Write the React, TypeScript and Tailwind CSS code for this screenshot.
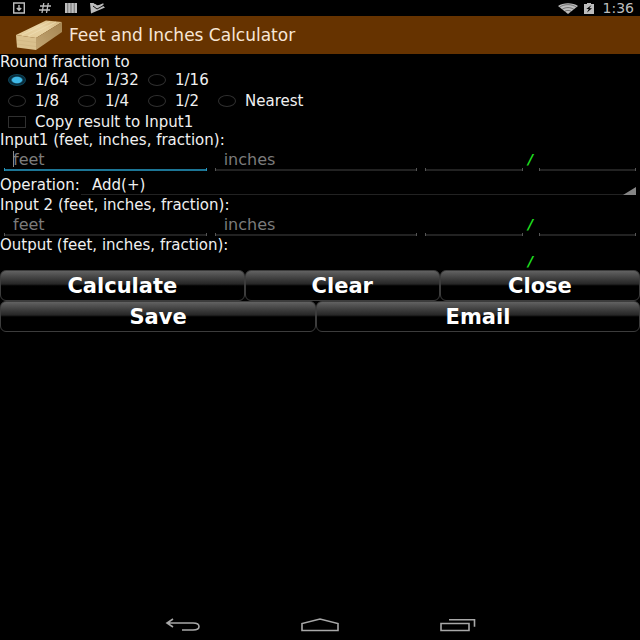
import { useState } from "react";
import type { ReactNode } from "react";

function Field({ label, hint, active = false }: { label: string; hint?: string; active?: boolean }) {
  return (
    <div className="relative mx-1 min-w-0">
      <input
        type="text"
        aria-label={label}
        placeholder={hint}
        className={`block h-6 w-full border-b-2 bg-transparent pl-[9px] pt-1 text-base text-white outline-none placeholder:text-[#7b7b7b] ${
          active ? "border-[#1c7595]" : "border-[#222222]"
        }`}
      />
      <span
        className={`pointer-events-none absolute inset-x-0 bottom-0 h-[3px] border-x ${
          active ? "border-[#2793b8]" : "border-[#555555]"
        }`}
      />
      {active && <span className="pointer-events-none absolute left-[9px] top-1 h-4 w-px bg-[#8a8a8a]" />}
    </div>
  );
}

function Slash() {
  return <span className="text-center text-sm font-bold italic leading-6 text-[#1fe01f]">/</span>;
}

function MeasureRow({ name, active }: { name: string; active?: boolean }) {
  return (
    <div className="grid h-[25px] grid-cols-[2fr_2fr_1fr_8px_1fr] items-start">
      <Field label={`${name} feet`} hint="feet" active={active} />
      <Field label={`${name} inches`} hint="inches" />
      <Field label={`${name} numerator`} />
      <Slash />
      <Field label={`${name} denominator`} />
    </div>
  );
}

function Caption({ children }: { children: ReactNode }) {
  return <div className="h-[15px] text-[15px] leading-[17px]">{children}</div>;
}

function PanelButton({ children, grow }: { children: ReactNode; grow: string }) {
  return (
    <button
      type="button"
      className={`h-[31px] min-w-0 rounded-md border border-[#3c3c3c] bg-linear-to-b from-[#626262] via-[#262626] via-45% to-black to-55% pt-[2px] text-[21px] font-bold leading-none ${grow}`}
    >
      {children}
    </button>
  );
}

const rows = [
  ["1/64", "1/32", "1/16"],
  ["1/8", "1/4", "1/2", "Nearest"],
];

export default function App() {
  const [fraction, setFraction] = useState("1/64");

  return (
    <div className="flex min-h-screen flex-col bg-black font-['DejaVu_Sans',sans-serif] text-[#f0f0f0]">
      <div className="flex h-4 items-center justify-between pl-3 pr-[6px] text-[#bdbdbd]">
        <div className="flex items-center gap-3">
          <svg width="14" height="12" viewBox="0 0 14 12" fill="none" stroke="currentColor" strokeWidth="1.4">
            <path d="M1.7 1h10.6v10H1.7zM7 3v5M4.8 6 7 8.2 9.2 6" />
          </svg>
          <svg width="14" height="12" viewBox="0 0 14 12" fill="none" stroke="currentColor" strokeWidth="1.3">
            <path d="M5.8 1 4 11M10.3 1 8.5 11M2 4h11M1 8h11" />
          </svg>
          <svg width="14" height="12" viewBox="0 0 14 12" fill="currentColor">
            <path d="M1 1h2.7v10H1zM4.1 1h2.7v10H4.1zM7.2 1h2.7v10H7.2zM10.3 1H13v10h-2.7z" />
          </svg>
          <svg width="16" height="12" viewBox="0 0 16 12">
            <path d="M0 1h3.500l3 2.500L12 3l3 2.500L1 11.500z" fill="currentColor" />
            <path d="m3 4 4 3L14.500 3" fill="none" stroke="#000000" strokeWidth=".9" />
            <path d="m5 2.500 2.500 2L13.500 1.800" fill="none" stroke="currentColor" strokeWidth="1.400" />
          </svg>
        </div>
        <div className="flex items-center gap-1">
          <svg width="22" height="11" viewBox="0 0 22 11">
            <path d="M1 3C6-.6 16-.6 21 3L11 11z" fill="currentColor" />
            <path d="M2.5 4.2C7.5.8 14.5.8 19.5 4.2M5.2 6.3c3.6-2.3 8-2.3 11.6 0M7.8 8.3c2-1.2 4.4-1.2 6.4 0" fill="none" stroke="#000000" strokeWidth=".4" />
          </svg>
          <svg width="12" height="12" viewBox="0 0 12 12">
            <path d="M1 2h3V1h4v1h3v10H1z" fill="currentColor" />
            <path d="M8.5 3 3.3 7h2.5L4 10.5 9 6.3H6.3z" fill="#000000" />
          </svg>
          <span className="pl-1 text-sm leading-4">1:36</span>
        </div>
      </div>

      <header className="flex h-[38px] items-center bg-[#663300] pl-[15px]">
        <svg width="48" height="32" viewBox="0 0 48 32">
          <defs>
            <linearGradient id="woodTop" x1="0" y1="1" x2="1" y2="0">
              <stop offset="0" stopColor="#e3ca96" />
              <stop offset=".6" stopColor="#e8d3a4" />
              <stop offset="1" stopColor="#d3b57e" />
            </linearGradient>
            <linearGradient id="woodSide" x1="0" y1="1" x2="1" y2="0">
              <stop offset="0" stopColor="#c3a673" />
              <stop offset="1" stopColor="#a58552" />
            </linearGradient>
          </defs>
          <path d="M1 16 31 1.5 47 3 21 19z" fill="url(#woodTop)" />
          <path d="M1 16 21 19v12L2 28.5z" fill="#dac18e" />
          <path d="M21 19 47 3v10L21 31z" fill="url(#woodSide)" />
          <path d="M7 16 35 2.5M13 17 41 3" stroke="#efdfb6" strokeWidth=".7" />
          <path d="m2 21 19 2.500M2 25l19 2.500" stroke="#cbb17c" strokeWidth=".5" />
        </svg>
        <h1 className="pl-[6px] text-[17px] leading-5 text-[#f7e6d6]">Feet and Inches Calculator</h1>
      </header>

      <main className="flex-1">
        <fieldset>
          <legend className="block h-[15px] text-[15px] leading-[17px]">Round fraction to</legend>
          {rows.map((row) => (
            <div key={row[0]} className="flex h-[21px] pl-2">
              {row.map((value) => (
                <label key={value} className="flex min-w-[70px] items-center gap-[9px] text-[15px] leading-5">
                  <input
                    type="radio"
                    name="fraction"
                    value={value}
                    checked={fraction === value}
                    onChange={() => setFraction(value)}
                    className="h-3 w-[18px] shrink-0 appearance-none rounded-[50%] border border-[#303030] checked:border-[#0e465c] checked:bg-radial checked:from-[#3fb9e8] checked:from-40% checked:to-[#082b3a] checked:to-55%"
                  />
                  {value}
                </label>
              ))}
            </div>
          ))}
        </fieldset>
        <label className="flex h-[21px] items-center gap-[9px] pl-2 text-[15px] leading-5">
          <input
            type="checkbox"
            className="h-3 w-[18px] shrink-0 appearance-none border border-[#303030] checked:bg-[#33b5e5]"
          />
          Copy result to Input1
        </label>

        <Caption>Input1 (feet, inches, fraction):</Caption>
        <MeasureRow name="Input1" active />

        <div className="flex h-[25px] items-start">
          <label htmlFor="operation" className="w-[81px] text-[15px] leading-[27px]">
            Operation:
          </label>
          <div className="relative mr-1 flex-1">
            <select
              id="operation"
              className="block h-[23px] w-full appearance-none border-b border-[#222222] bg-black pl-[11px] pt-[2px] text-[15px] outline-none"
            >
              <option>Add(+)</option>
              <option>Subtract(-)</option>
              <option>Multiply(*)</option>
              <option>Divide(/)</option>
            </select>
            <svg className="pointer-events-none absolute bottom-0 right-0" width="13" height="8" viewBox="0 0 13 8">
              <path d="M13 0v8H0z" fill="#858585" />
            </svg>
          </div>
        </div>

        <Caption>Input 2 (feet, inches, fraction):</Caption>
        <MeasureRow name="Input 2" />

        <Caption>Output (feet, inches, fraction):</Caption>
        <output className="grid h-[18px] grid-cols-[5fr_8px_1fr] content-center">
          <span />
          <Slash />
          <span />
        </output>

        <div className="flex text-white">
          <PanelButton grow="flex-[49]">Calculate</PanelButton>
          <PanelButton grow="flex-[39]">Clear</PanelButton>
          <PanelButton grow="flex-[40]">Close</PanelButton>
        </div>
        <div className="flex text-white">
          <PanelButton grow="flex-[79]">Save</PanelButton>
          <PanelButton grow="flex-[81]">Email</PanelButton>
        </div>
      </main>

      <nav className="flex h-[30px] items-center justify-center gap-[101px] text-[#a8a8a8]">
        <button type="button" aria-label="Back">
          <svg width="36" height="14" viewBox="0 0 36 14" fill="none" stroke="currentColor" strokeWidth="1.6">
            <path d="M9 1 3 5l6 4M3 5h26c8 0 8 7 0 7H18" />
          </svg>
        </button>
        <button type="button" aria-label="Home">
          <svg width="38" height="14" viewBox="0 0 38 14" fill="none" stroke="currentColor" strokeWidth="1.6">
            <path d="M1 12.5v-7L19 1l18 4.500v7z" />
          </svg>
        </button>
        <button type="button" aria-label="Recent apps">
          <svg width="36" height="14" viewBox="0 0 36 14" fill="none" stroke="currentColor" strokeWidth="1.6">
            <path d="M1 5.500h28v7H1zM9 1.800h25.500v7" />
          </svg>
        </button>
      </nav>
    </div>
  );
}
